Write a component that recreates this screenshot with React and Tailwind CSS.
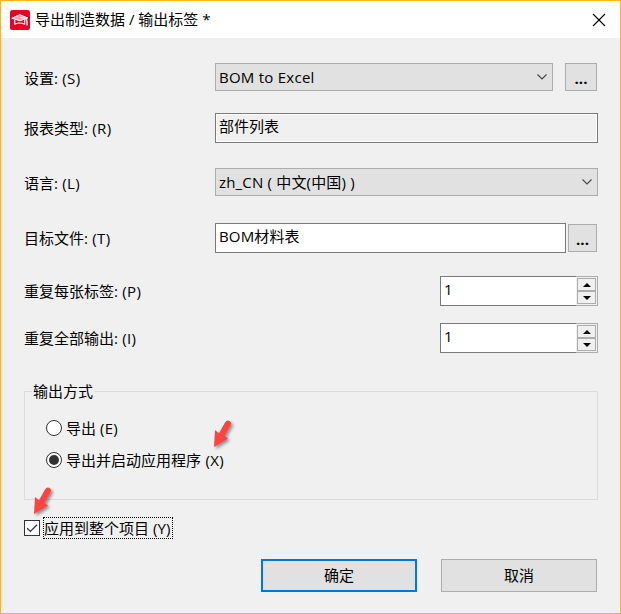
import clsx from "clsx";

export default function App() {
  return (
    <div className="flex h-[614px] w-[621px] flex-col border border-[#fdb813] bg-[#f0f0f0] font-['Open_Sans','Noto_Sans_CJK_SC',sans-serif] text-[15px] leading-5 text-black">
      <TitleBar />

      <main className="flex flex-col pl-[23px]">
        <div className="mt-[25px] flex h-[28px] items-center">
          <Label text="设置:" hotkey="S" className="pt-[2px]" />
          <Combo value="BOM to Excel" className="w-[338px]" tracking="tracking-[0.25px]" />
          <BrowseButton className="ml-3 w-8" />
        </div>

        <div className="mt-[22px] flex h-[30px] items-center">
          <Label text="报表类型:" hotkey="R" />
          <div className="h-[30px] w-[383px] border border-[#7a7a7a]">
            <div className="h-full border border-white pt-px pl-[2px]">部件列表</div>
          </div>
        </div>

        <div className="mt-[25px] flex h-[28px] items-center">
          <Label text="语言:" hotkey="L" className="pt-[2px]" />
          <Combo value="zh_CN ( 中文(中国) )" className="w-[383px]" tracking="tracking-[0.18px]" />
        </div>

        <div className="mt-[27px] flex h-[30px] items-center">
          <Label text="目标文件:" hotkey="T" />
          <div className="h-[30px] w-[351px] border border-[#7a7a7a] bg-white pt-[2px] pl-[3px] tracking-[0.15px]">BOM材料表</div>
          <BrowseButton className="ml-[2px] w-[29px]" />
        </div>

        <div className="mt-[23px] flex h-[30px] items-center">
          <Label text="重复每张标签:" hotkey="P" />
          <Spinner value={1} />
        </div>

        <div className="mt-[17px] flex h-[30px] items-center">
          <Label text="重复全部输出:" hotkey="I" />
          <Spinner value={1} />
        </div>

        <OutputMode />

        <div className="mt-[17px] flex h-[22px] items-center">
          <span className="flex h-4 w-4 items-center justify-center border border-[#333] bg-white">
            <svg className="shrink-0" width="14" height="14" viewBox="0 0 14 14" fill="none" stroke="#333" strokeWidth="1.3">
              <path d="M2.200 7.200 5.400 10.400 12 3.800" />
            </svg>
          </span>
          <span className="relative ml-[3px] h-[22px] w-[130px] border border-dotted border-black whitespace-nowrap">
            <span className="block">
              应用到整个项目 <span className="tracking-[0.2px]">(Y)</span>
            </span>
            <Arrow className="absolute -top-[33px] -left-[13px]" />
          </span>
        </div>

        <div className="mt-5 flex gap-6 pl-[237px]">
          <button type="button" className="h-[33px] w-[156px] border-2 border-[#0078d7] bg-[#e1e1e1] pb-[2px]">确定</button>
          <button type="button" className="h-[33px] w-[156px] border border-[#adadad] bg-[#e1e1e1] pb-[2px]">取消</button>
        </div>
      </main>
    </div>
  );
}

function TitleBar() {
  return (
    <header className="flex h-[37px] items-center bg-white pl-[9px]">
      <svg width="20" height="20" viewBox="0 0 20 20">
        <rect width="20" height="20" rx="2.5" fill="#e60023" />
        <g fill="none" stroke="#fff" strokeLinejoin="round">
          <path d="M1.800 8.200 9.800 4.600 17.800 8 10 10.800Z" fill="#fff" fillOpacity=".65" strokeWidth="1" />
          <path d="M4.700 10v4.200c3-1.400 7.200-1.400 10 0V10" strokeWidth="1.200" />
          <path d="M10 7.500c4.500 0 7 1.200 7 4v4" strokeWidth="1.200" />
        </g>
      </svg>
      <h1 className="ml-[5px] pb-[2px]">导出制造数据 / 输出标签 *</h1>
      <svg className="mr-[14px] ml-auto" width="14" height="14" viewBox="0 0 14 14" stroke="#000" strokeWidth="1.1">
        <path d="M1 1 13 13M13 1 1 13" />
      </svg>
    </header>
  );
}

function Label({ text, hotkey, className }) {
  return (
    <span className={clsx("w-[191px] shrink-0 whitespace-pre", className)}>
      {text} <span className="ml-[0.5px] tracking-[0.3px]">({hotkey})</span>
    </span>
  );
}

function Combo({ value, className, tracking }) {
  return (
    <div className={clsx("flex h-[28px] items-center justify-between border border-[#adadad] bg-[#e1e1e1] pr-[5px] pl-[3px]", className)}>
      <span className={tracking}>{value}</span>
      <svg width="10" height="6" viewBox="0 0 10 6" fill="none" stroke="#444" strokeWidth="1.1">
        <path d="M.5 .5 5 5 9.500 .5" />
      </svg>
    </div>
  );
}

function BrowseButton({ className }) {
  return (
    <button type="button" className={clsx("flex h-[28px] items-center justify-center border border-[#adadad] bg-[#e1e1e1] pt-px font-bold", className)}>
      ...
    </button>
  );
}

function Spinner({ value }) {
  return (
    <div className="ml-[225px] flex h-[30px]">
      <div className="w-[136px] border border-r-0 border-[#7a7a7a] bg-white pt-[2px] pl-[3px]">{value}</div>
      <div className="flex w-[22px] flex-col border border-l-0 border-[#adadad] p-px">
        <span className="flex flex-1 items-center justify-center border border-[#adadad] bg-[#f0f0f0]">
          <svg width="8" height="4" viewBox="0 0 8 4"><path d="M0 4 4 0 8 4Z" /></svg>
        </span>
        <span className="flex flex-1 items-center justify-center border border-[#adadad] bg-[#f0f0f0]">
          <svg width="8" height="4" viewBox="0 0 8 4"><path d="M0 0 4 4 8 0Z" /></svg>
        </span>
      </div>
    </div>
  );
}

function OutputMode() {
  return (
    <section className="mt-[38px] h-[109px] w-[574px] border border-[#dcdcdc]">
      <h2 className="-mt-[11px] ml-[7px] w-[62px] bg-[#f0f0f0] pl-px">输出方式</h2>
      <div className="mt-[17px] flex h-5 items-center pl-[21px]">
        <Radio />
        <span className="ml-1">
          导出 <span className="tracking-[0.3px]">(E)</span>
        </span>
      </div>
      <div className="mt-3 flex h-5 items-center pl-[21px]">
        <Radio checked />
        <span className="relative ml-1">
          导出并启动应用程序 <span className="ml-[0.5px] tracking-[0.4px]">(X)</span>
          <Arrow className="absolute -top-[32px] left-[145px]" />
        </span>
      </div>
    </section>
  );
}

function Radio({ checked }) {
  return (
    <span className="flex h-4 w-4 items-center justify-center rounded-full border border-[#333] bg-white">
      {checked && <span className="h-[10px] w-[10px] rounded-full bg-[#333]" />}
    </span>
  );
}

function Arrow({ className }) {
  return (
    <svg className={clsx("drop-shadow-[2px_2px_1.5px_rgba(0,0,0,0.4)]", className)} width="22" height="32" viewBox="0 0 22 32">
      <path d="M3 29 4 12 8 15.200 14 4.500Q16 1.500 18.500 3T19.500 7L13.500 18 17 20.500Z" fill="#ff4343" />
    </svg>
  );
}
